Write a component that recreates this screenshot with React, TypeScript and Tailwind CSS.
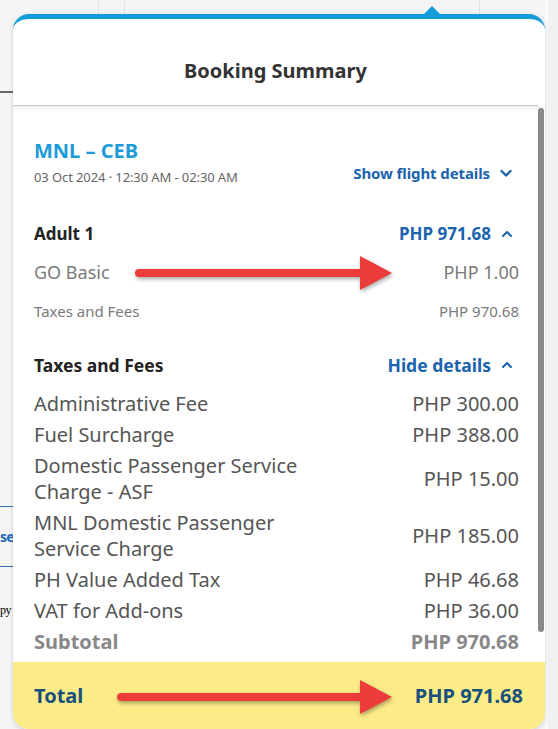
import React from 'react';

const fees: { label: string[]; amount: string }[] = [
  { label: ['Administrative Fee'], amount: 'PHP 300.00' },
  { label: ['Fuel Surcharge'], amount: 'PHP 388.00' },
  { label: ['Domestic Passenger Service', 'Charge - ASF'], amount: 'PHP 15.00' },
  { label: ['MNL Domestic Passenger', 'Service Charge'], amount: 'PHP 185.00' },
  { label: ['PH Value Added Tax'], amount: 'PHP 46.68' },
  { label: ['VAT for Add-ons'], amount: 'PHP 36.00' },
];

function Chevron({ up = false }: { up?: boolean }) {
  return (
    <svg width="14" height="10" viewBox="0 0 14 10" className="shrink-0">
      <path
        d={up ? 'M3 7 L7 3 L11 7' : 'M2.5 3 L7 7.5 L11.5 3'}
        fill="none"
        stroke="#1a63ad"
        strokeWidth={up ? 2 : 2.4}
        strokeLinecap="round"
        strokeLinejoin="round"
      />
    </svg>
  );
}

function Arrow({ width, headStart }: { width: number; headStart: number }) {
  return (
    <svg
      width={width + 6}
      height="40"
      viewBox={`0 0 ${width + 6} 40`}
      className="drop-shadow-[1px_2px_2px_rgba(0,0,0,0.35)]"
    >
      <rect x="1" y="14" width={headStart + 4} height="8" rx="4" fill="#ec3b3b" />
      <polygon points={`${headStart},1 ${width},18 ${headStart},35`} fill="#ec3b3b" />
    </svg>
  );
}

export default function App() {
  return (
    <div className="relative w-[558px] h-[729px] bg-[#f5f5f5] flex overflow-hidden font-['Noto_Sans',sans-serif]">
      {/* page behind the popover */}
      <div className="w-[13px] shrink-0 flex flex-col">
        <div className="h-[91px]" />
        <div className="h-[2px] bg-[#6b6b6b]" />
        <div className="h-[413px]" />
        <div className="h-px bg-[#2c6db4]" />
        <div className="h-[59px] flex items-center">
          <span className="whitespace-nowrap text-[14px] font-bold text-[#1f6bb5] tracking-[-0.8px]">se</span>
        </div>
        <div className="h-px bg-[#2c6db4]" />
        <div className="h-[32px]" />
        <div className="h-[22px] flex items-center">
          <span className="whitespace-nowrap text-[12px] text-black font-['Liberation_Serif',serif] tracking-[-0.5px]">py</span>
        </div>
      </div>

      {/* popover */}
      <div className="relative w-[532px] shrink-0 flex flex-col">
        <div className="h-[14px] flex">
          <div className="ml-[85px] w-px bg-[#e2e2e2]" />
          <div className="ml-[25px] w-px bg-[#e2e2e2]" />
          <div className="ml-[354px] w-px bg-[#e2e2e2]" />
        </div>
        <div className="absolute left-[410px] top-[6px] w-0 h-0 border-x-[9px] border-x-transparent border-b-[9px] border-b-[#129dd9]" />

        <div className="h-[715px] flex flex-col rounded-t-[16px] rounded-b-[16px] border-t-[5px] border-[#129dd9] bg-white shadow-[0_1px_4px_rgba(0,0,0,0.18)] overflow-hidden">
          {/* header */}
          <div className="h-[87px] shrink-0 mr-[7px] border-b border-[#c8c8c8] pt-[38px] text-center">
            <h2 className="text-[20px] leading-[28px] font-bold text-[#333]">Booking Summary</h2>
          </div>

          {/* body */}
          <div className="h-[556px] flex shadow-[inset_0_6px_6px_-6px_rgba(0,0,0,0.12)]">
            <div className="flex-1 pl-[21px] pr-[19px] pt-[32px]">
              <div className="flex items-end justify-between">
                <div>
                  <div className="text-[20px] leading-[26px] font-bold text-[#1b9bd7]">MNL – CEB</div>
                  <div className="mt-[5px] text-[13px] leading-[16px] text-[#666] tracking-[-0.1px]">
                    03 Oct 2024 · 12:30 AM - 02:30 AM
                  </div>
                </div>
                <div className="mb-[2px] flex items-center gap-[9px] text-[15px] leading-[20px] font-bold text-[#1a63ad] pr-[6px] tracking-[-0.1px]">
                  Show flight details
                  <Chevron />
                </div>
              </div>

              <div className="mt-[38px] flex items-center justify-between text-[17px] leading-[22px] font-bold">
                <span className="text-[#222]">Adult 1</span>
                <span className="flex items-center gap-[9px] text-[#1a63ad] pr-[5px]">
                  PHP 971.68
                  <Chevron up />
                </span>
              </div>

              <div className="mt-[15px] flex justify-between text-[18px] leading-[24px] text-[#7a7a7a]">
                <span>GO Basic</span>
                <span>PHP 1.00</span>
              </div>

              <div className="mt-[17px] flex justify-between text-[15px] leading-[20px] text-[#7a7a7a]">
                <span>Taxes and Fees</span>
                <span>PHP 970.68</span>
              </div>

              <div className="mt-[32px] flex items-center justify-between text-[17.5px] leading-[24px] font-bold">
                <span className="text-[#222]">Taxes and Fees</span>
                <span className="flex items-center gap-[9px] text-[#1a63ad] pr-[5px]">
                  Hide details
                  <Chevron up />
                </span>
              </div>

              <div className="mt-[14px] flex flex-col gap-[5px] text-[20px] leading-[26px] text-[#555]">
                {fees.map((f) => (
                  <div key={f.amount + f.label[0]} className="flex items-center justify-between">
                    <div>
                      {f.label.map((l) => (
                        <div key={l}>{l}</div>
                      ))}
                    </div>
                    <span>{f.amount}</span>
                  </div>
                ))}
                <div className="flex justify-between font-bold text-[#888]">
                  <span>Subtotal</span>
                  <span>PHP 970.68</span>
                </div>
              </div>
            </div>
            <div className="w-[7px] shrink-0 pt-[2px]">
              <div className="h-[524px] w-[6px] rounded-[3px] bg-[#8a8a8a]" />
            </div>
          </div>

          {/* total */}
          <div className="flex-1 bg-[#fcec88] flex items-center justify-between pl-[21px] pr-[22px] text-[20px] font-bold text-[#17507d]">
            <span>Total</span>
            <span>PHP 971.68</span>
          </div>
        </div>
      </div>

      <div className="flex-1 bg-[#f1f1f1] border-l-[3px] border-[#fafafa]" />

      {/* annotation arrows */}
      <div className="absolute left-[134px] top-[255px]">
        <Arrow width={258} headStart={226} />
      </div>
      <div className="absolute left-[116px] top-[679px]">
        <Arrow width={276} headStart={244} />
      </div>
    </div>
  );
}
